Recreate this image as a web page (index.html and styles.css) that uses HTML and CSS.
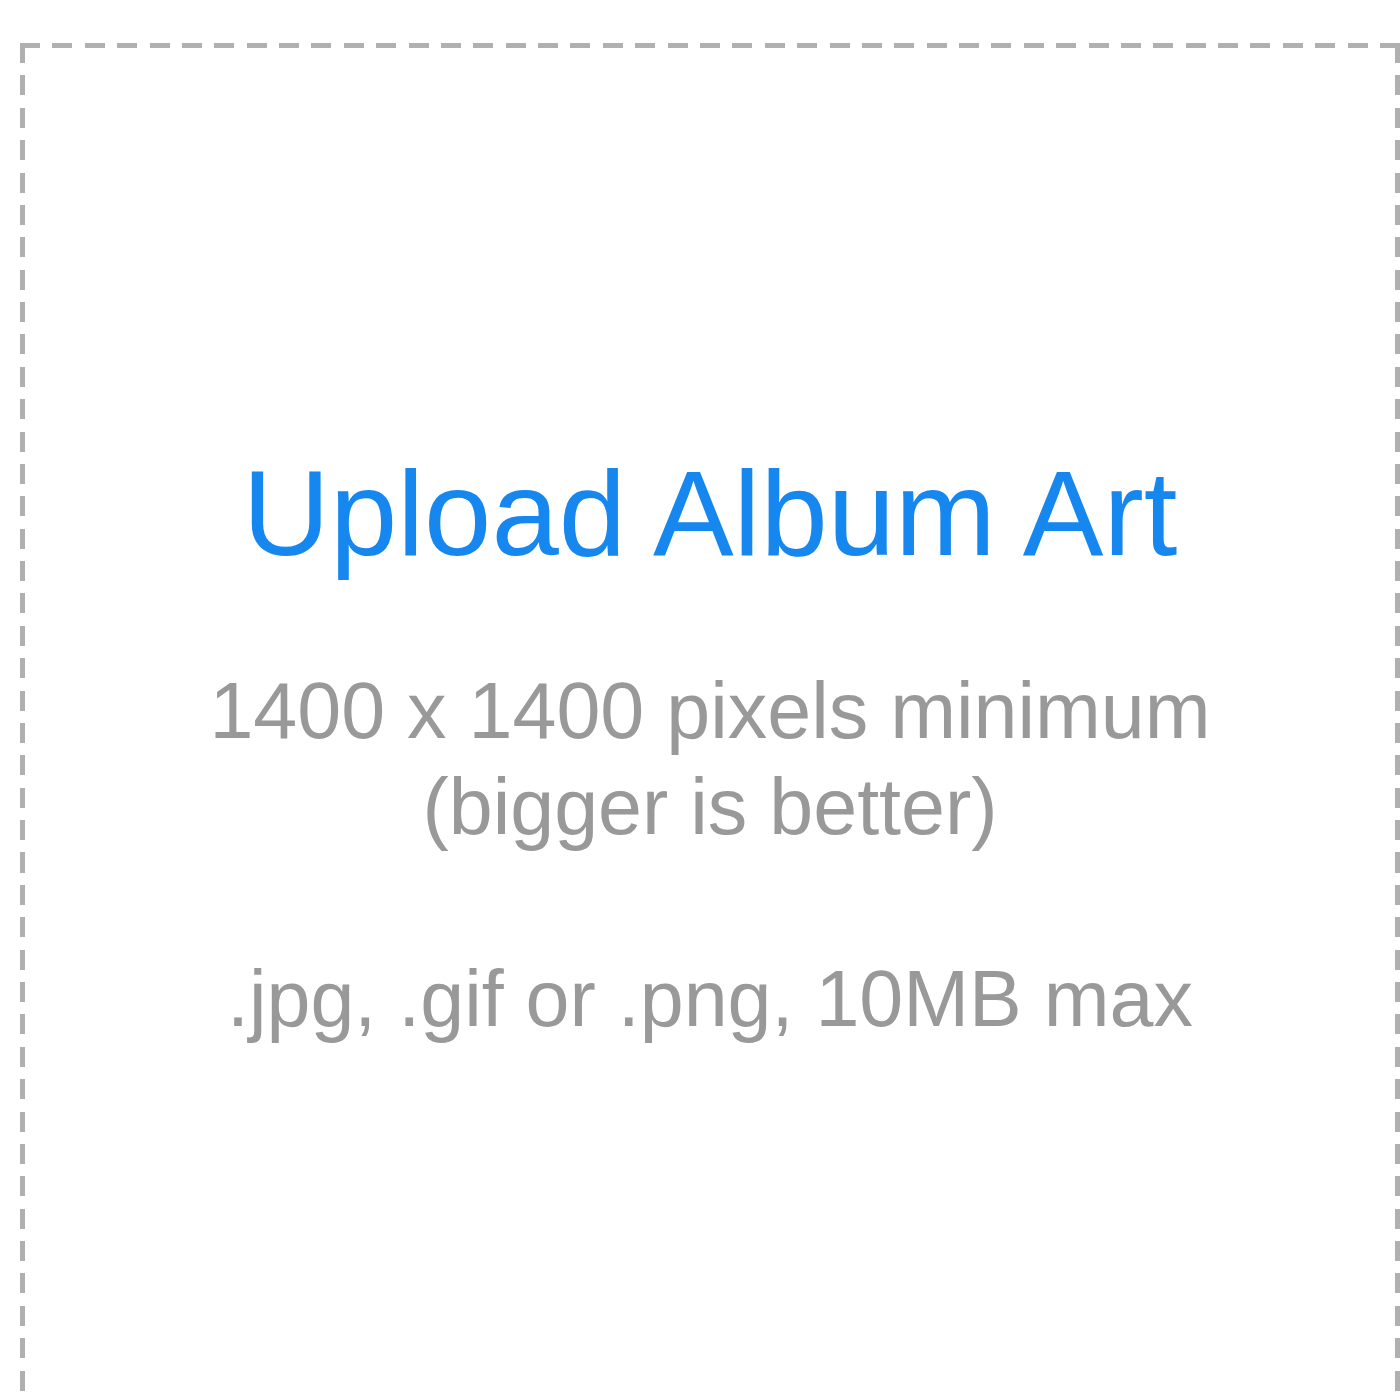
FILE: index.html
```html
<!DOCTYPE html>
<html lang="en">
<head>
<meta charset="utf-8" />
<title>Upload Album Art</title>
<link rel="stylesheet" href="styles.css">
</head>
<body>
<div class="dropzone">
  <div class="dropTitle">Upload Album Art</div>
  <div class="dropHint">
    1400 x 1400 pixels minimum<br>
    (bigger is better)<br>
    <br>
    .jpg, .gif or .png, 10MB max
  </div>
</div>
</body>
</html>
```

FILE: styles.css
```css
body {
  margin:0; background:#fff; overflow:hidden;
  font-family: "Liberation Sans", Arial, sans-serif;
}
.dropzone {
  box-sizing:border-box; width:1380px; height:1380px;
  margin:43px 0 0 20px; padding-top:398px; text-align:center;
  background:
    repeating-linear-gradient(to right, #b0b0b0 0 20px, transparent 20px 32.38px) top left / 100% 5px no-repeat,
    repeating-linear-gradient(to right, #b0b0b0 0 20px, transparent 20px 32.38px) bottom left / 100% 5px no-repeat,
    repeating-linear-gradient(to bottom, #b0b0b0 0 20px, transparent 20px 32.38px) top left / 5px 100% no-repeat,
    repeating-linear-gradient(to bottom, #b0b0b0 0 20px, transparent 20px 32.38px) top right / 5px 100% no-repeat;
}
.dropTitle {
  color:#1687ef; font-size:121px; line-height:144px;
}
.dropHint {
  margin-top:78px; color:#999; font-size:79px; line-height:96px;
}
```
